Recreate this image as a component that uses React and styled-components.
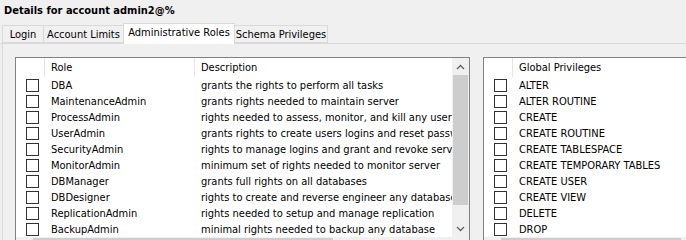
import React from "react";
import styled, { createGlobalStyle } from "styled-components";

const Global = createGlobalStyle`
  html, body { margin: 0; padding: 0; background: #f0f0f0; }
  body { font-family: "DejaVu Sans Condensed", "DejaVu Sans", sans-serif; font-size: 11px; color: #000; }
`;

const Page = styled.div`
  width: 686px;
  height: 240px;
  overflow: hidden;
  background: #f0f0f0;
  display: flex;
  flex-direction: column;
`;

const Title = styled.div`
  flex: none;
  height: 23px;
  box-sizing: border-box;
  padding: 3px 0 0 4px;
  font-weight: bold;
  font-size: 11px;
  line-height: 15px;
`;

const TabStrip = styled.div`
  flex: none;
  display: flex;
  align-items: flex-end;
  height: 21px;
  box-sizing: border-box;
  padding-left: 2px;
  border-bottom: 1px solid #d9d9d9;
  position: relative;
  z-index: 1;
`;

const Tab = styled.div`
  flex: none;
  box-sizing: border-box;
  width: ${(p) => p.$w}px;
  height: ${(p) => (p.$active ? "21px" : "18px")};
  margin-bottom: ${(p) => (p.$active ? "-1px" : "0")};
  padding-top: 1px;
  border: 1px solid #d9d9d9;
  border-bottom: ${(p) => (p.$active ? "none" : "1px solid #d9d9d9")};
  margin-left: ${(p) => (p.$first ? "0" : "-1px")};
  background: ${(p) => (p.$active ? "#ffffff" : "#f0f0f0")};
  line-height: 15px;
  text-align: center;
  white-space: nowrap;
`;

const Panel = styled.div`
  flex: 1;
  min-height: 0;
  overflow: hidden;
  margin-left: 2px;
  border-left: 1px solid #d9d9d9;
  padding: 13px 0 0 12px;
  display: flex;
  gap: 13px;
  align-items: flex-start;
`;

const ListBox = styled.div`
  flex: none;
  width: ${(p) => p.$width}px;
  height: 200px;
  box-sizing: border-box;
  border: 1px solid #828282;
  background: #fff;
  display: grid;
  grid-template-columns: 1fr ${(p) => (p.$vscroll ? "17px" : "0px")};
  grid-template-rows: 179px 17px;
  overflow: hidden;
`;

const ListBody = styled.div`
  overflow: hidden;
  display: flex;
  flex-direction: column;
`;

const Row = styled.div`
  flex: none;
  display: grid;
  grid-template-columns: ${(p) => p.$cols};
  height: ${(p) => (p.$header ? "19px" : "16px")};
  align-items: center;
  white-space: nowrap;
`;

const HeadCell = styled.div`
  height: 100%;
  box-sizing: border-box;
  border-right: ${(p) => (p.$last ? "none" : "1px solid #e5e5e5")};
  padding: 1px 0 0 6px;
  line-height: 18px;
  overflow: hidden;
`;

const Cell = styled.div`
  padding: 1px 0 0 6px;
  overflow: hidden;
  line-height: 15px;
`;

const BoxCell = styled.div`
  display: flex;
  align-items: center;
  padding-left: 10px;
  height: 16px;
`;

const Check = styled.span`
  display: block;
  width: 13px;
  height: 13px;
  box-sizing: border-box;
  border: 1px solid #333;
  background: #fff;
  margin-top: 1px;
`;

const VScroll = styled.div`
  background: #f0f0f0;
  display: flex;
  flex-direction: column;
`;

const Arrow = styled.div`
  flex: none;
  width: 17px;
  height: 17px;
  display: flex;
  align-items: center;
  justify-content: center;
`;

const Thumb = styled.div`
  flex: none;
  margin: 0 1px;
  height: ${(p) => p.$h}px;
  background: #cdcdcd;
`;

const Track = styled.div`
  flex: 1;
`;

const HScroll = styled.div`
  grid-column: 1 / -1;
  background: #f0f0f0;
  display: flex;
`;

const HThumb = styled.div`
  flex: none;
  width: ${(p) => p.$w}px;
  margin-top: 1px;
  background: #cdcdcd;
`;

const Chevron = ({ up }) => (
  <svg width="9" height="6" viewBox="0 0 9 6">
    <path
      d={up ? "M1 5 L4.5 1.5 L8 5" : "M1 1 L4.5 4.5 L8 1"}
      fill="none"
      stroke="#606060"
      strokeWidth="1.3"
    />
  </svg>
);

const roles = [
  ["DBA", "grants the rights to perform all tasks"],
  ["MaintenanceAdmin", "grants rights needed to maintain server"],
  ["ProcessAdmin", "rights needed to assess, monitor, and kill any user process running in server"],
  ["UserAdmin", "grants rights to create users logins and reset passwords"],
  ["SecurityAdmin", "rights to manage logins and grant and revoke server and database level permission"],
  ["MonitorAdmin", "minimum set of rights needed to monitor server"],
  ["DBManager", "grants full rights on all databases"],
  ["DBDesigner", "rights to create and reverse engineer any database schema"],
  ["ReplicationAdmin", "rights needed to setup and manage replication"],
  ["BackupAdmin", "minimal rights needed to backup any database"],
];

const privileges = [
  "ALTER",
  "ALTER ROUTINE",
  "CREATE",
  "CREATE ROUTINE",
  "CREATE TABLESPACE",
  "CREATE TEMPORARY TABLES",
  "CREATE USER",
  "CREATE VIEW",
  "DELETE",
  "DROP",
];

const tabs = [
  ["Login", 42],
  ["Account Limits", 81],
  ["Administrative Roles", 112, true],
  ["Schema Privileges", 94],
];

const roleCols = "29px 150px 1fr";
const privCols = "29px 1fr";

export default function App() {
  return (
    <Page>
      <Global />
      <Title>Details for account admin2@%</Title>
      <TabStrip>
        {tabs.map(([label, w, active], i) => (
          <Tab key={label} $w={w} $active={active} $first={i === 0}>
            {label}
          </Tab>
        ))}
      </TabStrip>
      <Panel>
        <ListBox $width={455} $vscroll>
          <ListBody>
            <Row $header $cols={roleCols}>
              <HeadCell />
              <HeadCell>Role</HeadCell>
              <HeadCell $last>Description</HeadCell>
            </Row>
            {roles.map(([r, d]) => (
              <Row key={r} $cols={roleCols}>
                <BoxCell>
                  <Check />
                </BoxCell>
                <Cell>{r}</Cell>
                <Cell>{d}</Cell>
              </Row>
            ))}
          </ListBody>
          <VScroll>
            <Arrow>
              <Chevron up />
            </Arrow>
            <Thumb $h={130} />
            <Track />
            <Arrow>
              <Chevron />
            </Arrow>
          </VScroll>
          <HScroll>
            <Arrow />
            <HThumb $w={300} />
          </HScroll>
        </ListBox>
        <ListBox $width={230}>
          <ListBody>
            <Row $header $cols={privCols}>
              <HeadCell />
              <HeadCell $last>Global Privileges</HeadCell>
            </Row>
            {privileges.map((p) => (
              <Row key={p} $cols={privCols}>
                <BoxCell>
                  <Check />
                </BoxCell>
                <Cell>{p}</Cell>
              </Row>
            ))}
          </ListBody>
          <div />
          <HScroll>
            <Arrow />
            <HThumb $w={180} />
          </HScroll>
        </ListBox>
      </Panel>
    </Page>
  );
}
